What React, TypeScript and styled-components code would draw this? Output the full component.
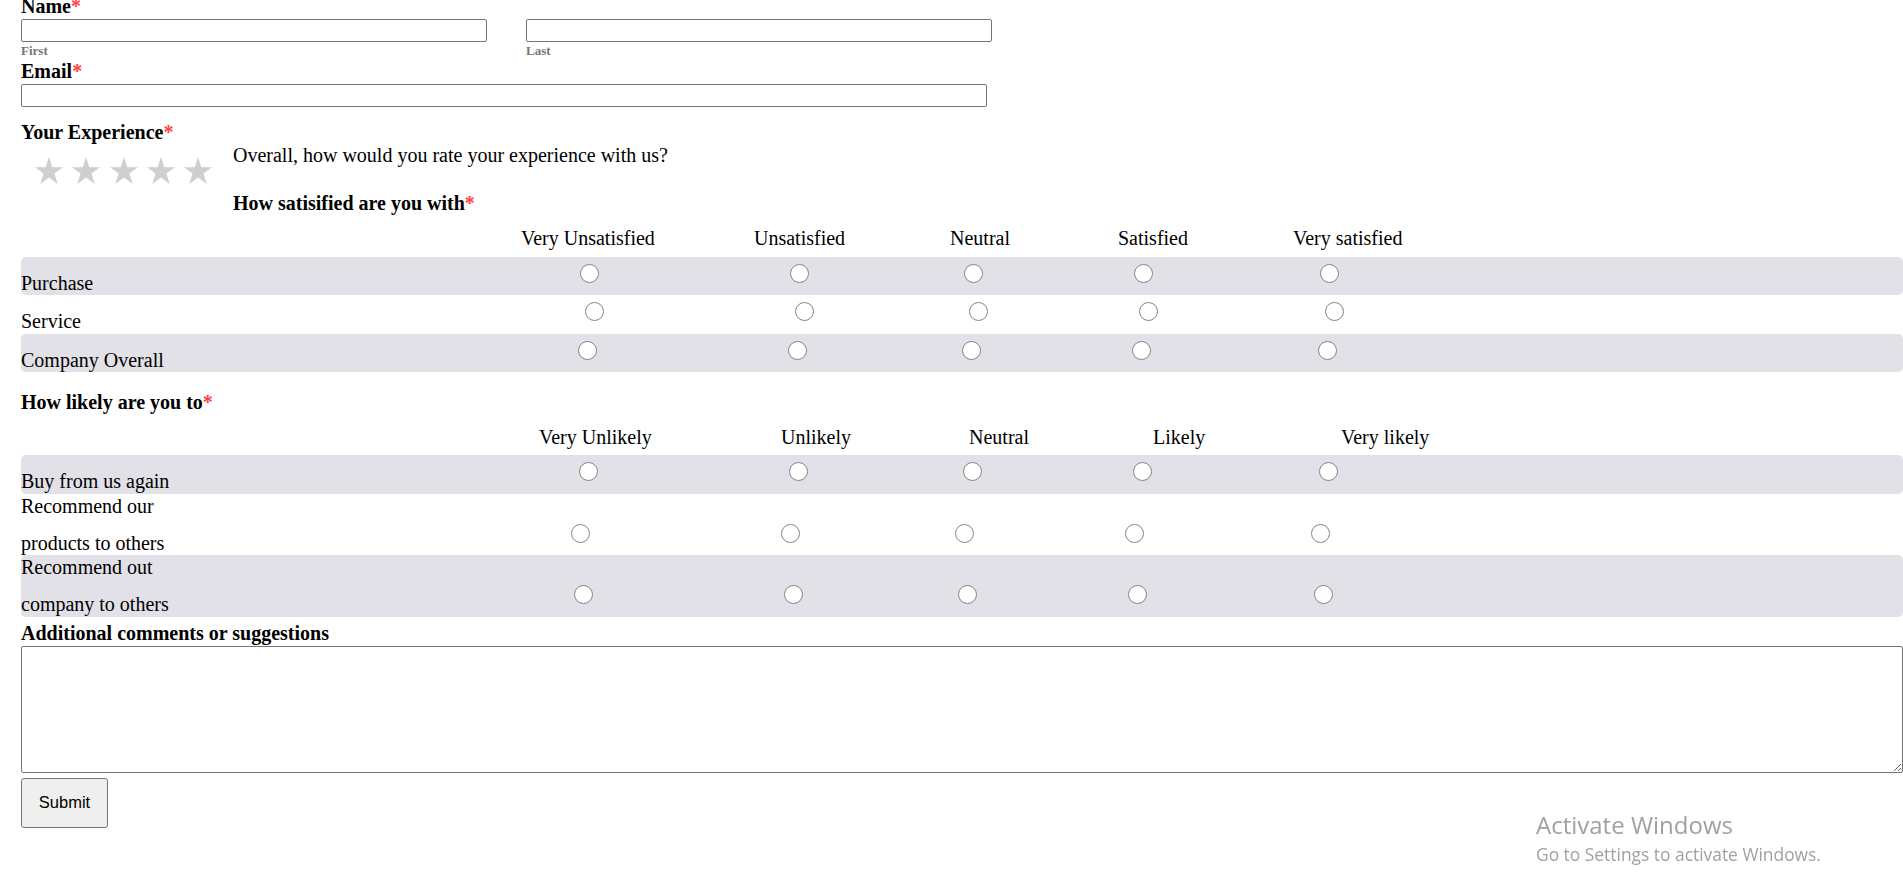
import React from 'react'
import styled, { createGlobalStyle } from 'styled-components'

interface LikertRow {
  label: string
  lead: number // width of the label column, nudges the radios of this row
}

interface LikertMatrix {
  name: string
  options: string[]
  headCols: string
  rows: LikertRow[]
}

const satisfaction: LikertMatrix = {
  name: 'satisfaction',
  options: ['Very Unsatisfied', 'Unsatisfied', 'Neutral', 'Satisfied', 'Very satisfied'],
  headCols: '500px 233px 196px 168px 175px 1fr',
  rows: [
    { label: 'Purchase', lead: 463 },
    { label: 'Service', lead: 468 },
    { label: 'Company Overall', lead: 461 }
  ]
}

const likelihood: LikertMatrix = {
  name: 'likelihood',
  options: ['Very Unlikely', 'Unlikely', 'Neutral', 'Likely', 'Very likely'],
  headCols: '518px 242px 188px 184px 188px 1fr',
  rows: [
    { label: 'Buy from us again', lead: 462 },
    { label: 'Recommend our products to others', lead: 454 },
    { label: 'Recommend out company to others', lead: 457 }
  ]
}

const GlobalStyle = createGlobalStyle`
  html, body {
    margin: 0;
    background: #fff;
  }
  body {
    font-family: "Liberation Serif", "Times New Roman", serif;
    font-size: 20px;
    color: #000;
    overflow: hidden;
  }
`

const Form = styled.form`
  display: flex;
  flex-direction: column;
  margin-top: -5.5px;
  padding-left: 21px;
`

const FieldLabel = styled.div<{ $gap?: number }>`
  font-weight: bold;
  line-height: 23px;
  margin-top: ${p => p.$gap ?? 0}px;
`

const Required = styled.span`
  color: #ff3d3d;
`

const NameRow = styled.div`
  display: flex;
  gap: 39px;
  margin-top: 1.5px;
`

const NamePart = styled.div`
  display: flex;
  flex-direction: column;
  width: 466px;
`

const TextInput = styled.input<{ $width: string; $gap?: number }>`
  box-sizing: border-box;
  width: ${p => p.$width};
  height: 23px;
  margin: ${p => p.$gap ?? 0}px 0 0;
  padding: 0 4px;
  border: 1px solid #767676;
  border-radius: 2px;
  font-family: "Liberation Sans", Arial, sans-serif;
  font-size: 16px;
`

const SubLabel = styled.span`
  margin-top: 1px;
  font-size: 13px;
  font-weight: bold;
  line-height: 15px;
  color: #777;
`

const Experience = styled.div`
  display: flex;
`

const StarBox = styled.div`
  display: flex;
  align-items: flex-start;
  gap: 9.3px;
  width: 198px;
  padding: 13px 0 0 14px;
`

const Question = styled.div`
  display: flex;
  flex-direction: column;
  line-height: 23px;
`

const SubHeading = styled.div`
  margin-top: 25px;
  font-weight: bold;
`

const Header = styled.div<{ $cols: string }>`
  display: grid;
  grid-template-columns: ${p => p.$cols};
  margin-top: 12px;
  padding-bottom: 6.5px;
  line-height: 23px;
`

const Row = styled.div<{ $lead: number; $shaded: boolean }>`
  display: grid;
  grid-template-columns: ${p => p.$lead}px 210px 210px 138px 202px 170px 1fr;
  align-items: end;
  min-height: 38.5px;
  border-radius: 5px;
  background: ${p => (p.$shaded ? '#e2e1e7' : 'transparent')};
`

const RowLabel = styled.div`
  max-width: 160px;
  margin: -6px 0 -6.5px;
  line-height: 37px;
`

const RadioCell = styled.div`
  display: flex;
  justify-content: center;
  padding-bottom: 12.5px;
`

const Radio = styled.input.attrs({ type: 'radio' })`
  appearance: none;
  box-sizing: border-box;
  width: 19px;
  height: 19px;
  margin: 0;
  border: 1px solid #858585;
  border-radius: 50%;
  background: #fff;
`

const Comments = styled.textarea`
  box-sizing: border-box;
  width: 100%;
  height: 127px;
  margin: 1px 0 0;
  border: 1px solid #767676;
  border-radius: 2px;
  font-family: "Liberation Mono", monospace;
`

const SubmitButton = styled.button`
  align-self: flex-start;
  box-sizing: border-box;
  width: 87px;
  height: 49.5px;
  margin-top: 5.5px;
  border: 1px solid #767676;
  border-radius: 3px;
  background: #efefef;
  font-family: "Liberation Sans", Arial, sans-serif;
  font-size: 16.5px;
  color: #000;
`

const Watermark = styled.div`
  position: fixed;
  left: 1536px;
  top: 811px;
  font-family: "Open Sans", "Noto Sans", sans-serif;
  color: rgba(120, 120, 120, 0.7);
  pointer-events: none;
`

const WatermarkTitle = styled.div`
  font-size: 24px;
  line-height: 28px;
`

const WatermarkHint = styled.div`
  font-size: 17.4px;
  line-height: 30px;
`

const Star = () => (
  <svg width="28" height="27" viewBox="0 0 28 27">
    <polygon
      points="14,0 17.3,10.2 28,10.3 19.4,16.6 22.7,27 14,20.6 5.3,27 8.6,16.6 0,10.3 10.7,10.2"
      fill="#cfcfcf"
    />
  </svg>
)

const Matrix: React.FC<{ matrix: LikertMatrix }> = ({ matrix }) => (
  <>
    <Header $cols={matrix.headCols}>
      <span />
      {matrix.options.map(option => (
        <span key={option}>{option}</span>
      ))}
    </Header>
    {matrix.rows.map((row, i) => (
      <Row key={row.label} $lead={row.lead} $shaded={i % 2 === 0}>
        <RowLabel>{row.label}</RowLabel>
        {matrix.options.map(option => (
          <RadioCell key={option}>
            <Radio name={`${matrix.name}-${i}`} value={option} />
          </RadioCell>
        ))}
      </Row>
    ))}
  </>
)

const App: React.FC = () => (
  <>
    <GlobalStyle />
    <Form onSubmit={e => e.preventDefault()}>
      <FieldLabel>
        Name<Required>*</Required>
      </FieldLabel>
      <NameRow>
        <NamePart>
          <TextInput $width="100%" />
          <SubLabel>First</SubLabel>
        </NamePart>
        <NamePart>
          <TextInput $width="100%" />
          <SubLabel>Last</SubLabel>
        </NamePart>
      </NameRow>

      <FieldLabel $gap={2}>
        Email<Required>*</Required>
      </FieldLabel>
      <TextInput $width="966px" $gap={1} type="email" />

      <FieldLabel $gap={14}>
        Your Experience<Required>*</Required>
      </FieldLabel>
      <Experience>
        <StarBox>
          {[1, 2, 3, 4, 5].map(n => (
            <Star key={n} />
          ))}
        </StarBox>
        <Question>
          <span>Overall, how would you rate your experience with us?</span>
          <SubHeading>
            How satisified are you with<Required>*</Required>
          </SubHeading>
        </Question>
      </Experience>
      <Matrix matrix={satisfaction} />

      <FieldLabel $gap={18.5}>
        How likely are you to<Required>*</Required>
      </FieldLabel>
      <Matrix matrix={likelihood} />

      <FieldLabel $gap={5}>Additional comments or suggestions</FieldLabel>
      <Comments />
      <SubmitButton type="submit">Submit</SubmitButton>
    </Form>

    <Watermark>
      <WatermarkTitle>Activate Windows</WatermarkTitle>
      <WatermarkHint>Go to Settings to activate Windows.</WatermarkHint>
    </Watermark>
  </>
)

export default App
